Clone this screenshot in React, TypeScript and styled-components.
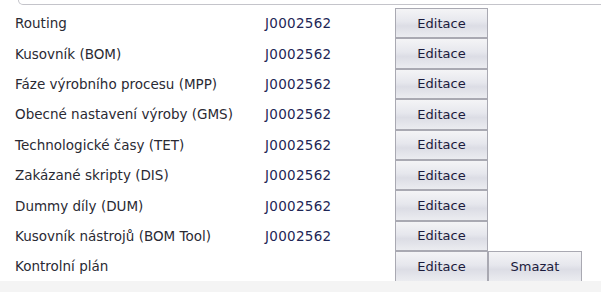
import styled, { createGlobalStyle } from 'styled-components';

const GlobalStyle = createGlobalStyle`
  html, body {
    margin: 0;
    padding: 0;
    background: #ffffff;
    overflow: hidden;
  }
  body {
    font-family: "DejaVu Sans", Verdana, sans-serif;
  }
`;

const Page = styled.div`
  width: 601px;
  height: 292px;
  display: flex;
  flex-direction: column;
  overflow: hidden;
`;

const Scroller = styled.div`
  height: 281px;
  overflow: hidden;
`;

const PanelEdge = styled.div`
  height: 4px;
  margin-left: 18px;
  margin-right: -10px;
  border: 1px solid #c4c4ca;
  border-top: none;
  border-bottom-left-radius: 6px;
  margin-bottom: 3px;
`;

const Table = styled.div`
  display: grid;
  grid-template-columns: 265px 130px 93px 94px;
  grid-auto-rows: 30.4px;
`;

const Label = styled.div`
  padding-left: 15px;
  display: flex;
  align-items: center;
  font-size: 13.5px;
  color: #2a2a33;
  white-space: nowrap;
`;

const Code = styled.div`
  display: flex;
  align-items: center;
  font-size: 13.5px;
  letter-spacing: 0.3px;
  color: #1e2656;
`;

const Button = styled.button`
  margin: 0;
  height: 100%;
  border: 1px solid #a9a9b2;
  background: linear-gradient(#f4f4f6 0%, #e6e7ed 45%, #dcdde5 60%, #ebecf0 100%);
  font-family: "DejaVu Sans", Verdana, sans-serif;
  font-size: 13px;
  color: #1b1b3c;
  padding: 0;
  cursor: pointer;
`;

const Cell = styled.div``;

const Footer = styled.div`
  flex: 1;
  background: #f4f4f4;
`;

const rows = [
  'Routing',
  'Kusovník (BOM)',
  'Fáze výrobního procesu (MPP)',
  'Obecné nastavení výroby (GMS)',
  'Technologické časy (TET)',
  'Zakázané skripty (DIS)',
  'Dummy díly (DUM)',
  'Kusovník nástrojů (BOM Tool)',
];

export default function App() {
  return (
    <Page>
      <GlobalStyle />
      <Scroller>
        <PanelEdge />
        <Table>
          {rows.map((r) => (
            <>
              <Label key={r}>{r}</Label>
              <Code>J0002562</Code>
              <Button>Editace</Button>
              <Cell />
            </>
          ))}
          <Label>Kontrolní plán</Label>
          <Code />
          <Button>Editace</Button>
          <Button>Smazat</Button>
        </Table>
      </Scroller>
      <Footer />
    </Page>
  );
}
